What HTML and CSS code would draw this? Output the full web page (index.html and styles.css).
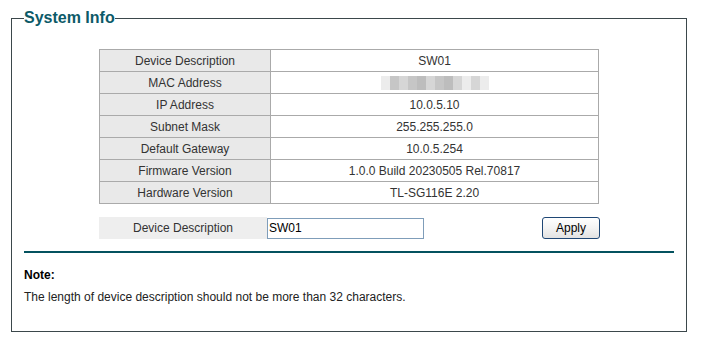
FILE: index.html
```html
<!DOCTYPE html>
<html>
<head>
<meta charset="utf-8">
<link rel="stylesheet" href="styles.css">
</head>
<body>
<div class="wrap">
  <fieldset class="panel">
    <legend class="title">System Info</legend>
    <table class="info">
      <tr><td class="lbl">Device Description</td><td>SW01</td></tr>
      <tr><td class="lbl">MAC Address</td><td><span class="blur"><i class="b1"></i><i class="b2"></i><i class="b3"></i><i class="b2"></i><i class="b4"></i><i class="b3"></i><i class="b2"></i><i class="b4"></i><i class="b3"></i><i class="b1"></i><i class="b3"></i><i class="b1"></i></span></td></tr>
      <tr><td class="lbl">IP Address</td><td>10.0.5.10</td></tr>
      <tr><td class="lbl">Subnet Mask</td><td>255.255.255.0</td></tr>
      <tr><td class="lbl">Default Gateway</td><td>10.0.5.254</td></tr>
      <tr><td class="lbl">Firmware Version</td><td>1.0.0 Build 20230505 Rel.70817</td></tr>
      <tr><td class="lbl">Hardware Version</td><td>TL-SG116E 2.20</td></tr>
    </table>
    <div class="form-row">
      <div class="form-lbl">Device Description</div>
      <input class="txt" type="text" value="SW01">
      <div class="spacer"></div>
      <button class="btn">Apply</button>
    </div>
    <div class="rule"></div>
    <div class="note">
      <div class="note-title">Note:</div>
      <div class="note-text">The length of device description should not be more than 32 characters.</div>
    </div>
  </fieldset>
</div>
</body>
</html>
```
FILE: styles.css
```css
html, body {
  margin: 0;
  padding: 0;
  background: #fff;
  font-family: "Liberation Sans", Arial, sans-serif;
  font-size: 12px;
  color: #333;
}
.wrap {
  padding: 9px 0 0 11px;
}
.panel {
  box-sizing: border-box;
  width: 676px;
  height: 323px;
  margin: 0;
  padding: 0 12px 0 12px;
  border: 1px solid #3b474b;
}
.title {
  padding: 0;
  margin-left: 0;
  font-size: 16px;
  font-weight: bold;
  line-height: 18px;
  color: #0c5a68;
}
.info {
  border-collapse: collapse;
  width: 500px;
  margin: 22px auto 0 auto;
}
.info td {
  border: 1px solid #aaaaaa;
  height: 21px;
  padding: 0;
  text-align: center;
  vertical-align: middle;
  line-height: 14px;
  color: #333;
}
.info td.lbl {
  width: 170px;
  background: #e9e9e9;
}
.blur {
  display: inline-flex;
  vertical-align: middle;
  height: 14px;
}
.blur i {
  display: block;
  width: 9px;
  height: 14px;
}
.blur .b1 { background: #ececec; }
.blur .b2 { background: #c6c6c6; }
.blur .b3 { background: #d6d6d6; }
.blur .b4 { background: #bdbdbd; }
.form-row {
  display: flex;
  align-items: center;
  width: 500px;
  margin: 13px auto 0 auto;
  height: 22px;
}
.form-lbl {
  width: 168px;
  height: 22px;
  line-height: 22px;
  background: #eeeeee;
  text-align: center;
  color: #333;
}
.txt {
  box-sizing: border-box;
  width: 157px;
  height: 21px;
  margin: 0;
  padding: 0 1px;
  border: 1px solid #7f9db9;
  font-family: "Liberation Sans", Arial, sans-serif;
  font-size: 12px;
  color: #000;
  outline: none;
}
.spacer {
  flex: 1;
}
.btn {
  box-sizing: border-box;
  width: 58px;
  height: 22px;
  margin: 0 -1px 0 0;
  padding: 0;
  border: 1px solid #1f4775;
  border-radius: 3px;
  background: linear-gradient(#ffffff, #f3f3f3 50%, #e2e2e2);
  font-family: "Liberation Sans", Arial, sans-serif;
  font-size: 12px;
  color: #000;
}
.rule {
  height: 2px;
  background: #04525f;
  margin-top: 12px;
}
.note {
  padding-top: 15px;
}
.note-title {
  font-weight: bold;
  color: #000;
  line-height: 14px;
}
.note-text {
  margin-top: 8px;
  line-height: 14px;
  color: #222;
}
```
